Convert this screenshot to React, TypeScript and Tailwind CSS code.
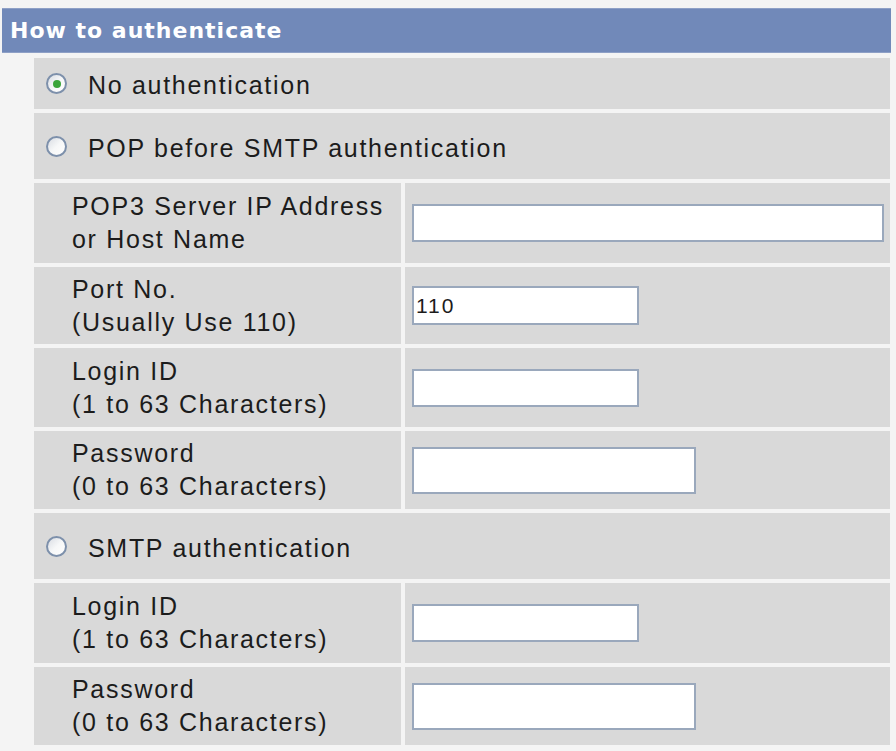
import React from "react";

const font = { fontFamily: '"Liberation Sans", Arial, sans-serif' };

const Radio = ({ checked }: { checked?: boolean }) => (
  <span className="flex h-[21px] w-[21px] shrink-0 items-center justify-center rounded-full border-2 border-[#7d90ab] bg-gradient-to-br from-[#d9dde3] via-[#f6f7f8] to-white">
    {checked && <span className="h-[8px] w-[8px] rounded-full bg-[#3aa53a]" />}
  </span>
);

const RadioRow = ({ label, checked, h }: { label: string; checked?: boolean; h: string }) => (
  <div className={`flex items-center bg-[#d9d9d9] pl-[12px] ${h}`}>
    <Radio checked={checked} />
    <span className="ml-[21px] pt-[4px] text-[25px] leading-[33px] tracking-[1.7px] text-[#1c1c1c]">{label}</span>
  </div>
);

const FieldRow = ({
  line1,
  line2,
  h,
  inputW,
  inputH = "h-[38px]",
  value,
}: {
  line1: string;
  line2: string;
  h: string;
  inputW: string;
  inputH?: string;
  value?: string;
}) => (
  <div className={`grid grid-cols-[367px_1fr] gap-[4px] ${h}`}>
    <div className="flex flex-col justify-center bg-[#d9d9d9] pl-[38px] text-[25px] leading-[33px] tracking-[1.7px] text-[#1c1c1c]">
      <span>{line1}</span>
      <span>{line2}</span>
    </div>
    <div className="flex items-center bg-[#d9d9d9] pl-[7px]">
      <div
        className={`flex items-center border-2 border-[#9aa8bc] bg-white pl-[2px] text-[21px] tracking-[2px] text-[#1c1c1c] ${inputW} ${inputH}`}
      >
        {value}
      </div>
    </div>
  </div>
);

export default function App() {
  return (
    <div className="h-[751px] w-[896px] overflow-hidden bg-[#f4f4f4] pt-[8px]" style={font}>
      {/* Section header */}
      <div
        className="ml-[2px] flex h-[45px] w-[889px] items-center border-y border-[#8ea0c6] bg-[#7189b9] pl-[8px] text-[22px] font-bold tracking-[1px] text-white"
        style={{ fontFamily: '"DejaVu Sans", Verdana, sans-serif' }}
      >
        How to authenticate
      </div>

      <div className="ml-[34px] mt-[5px] flex w-[856px] flex-col gap-[4px]">
        <RadioRow label="No authentication" checked h="h-[51px]" />
        <RadioRow label="POP before SMTP authentication" h="h-[66px]" />
        <FieldRow line1="POP3 Server IP Address" line2="or Host Name" h="h-[80px]" inputW="w-[472px]" />
        <FieldRow line1="Port No." line2="(Usually Use 110)" h="h-[77px]" inputW="w-[227px]" inputH="h-[39px]" value="110" />
        <FieldRow line1="Login ID" line2="(1 to 63 Characters)" h="h-[79px]" inputW="w-[227px]" />
        <FieldRow line1="Password" line2="(0 to 63 Characters)" h="h-[78px]" inputW="w-[284px]" inputH="h-[47px]" />
        <RadioRow label="SMTP authentication" h="h-[66px]" />
        <FieldRow line1="Login ID" line2="(1 to 63 Characters)" h="h-[80px]" inputW="w-[227px]" />
        <FieldRow line1="Password" line2="(0 to 63 Characters)" h="h-[78px]" inputW="w-[284px]" inputH="h-[47px]" />
      </div>
    </div>
  );
}
